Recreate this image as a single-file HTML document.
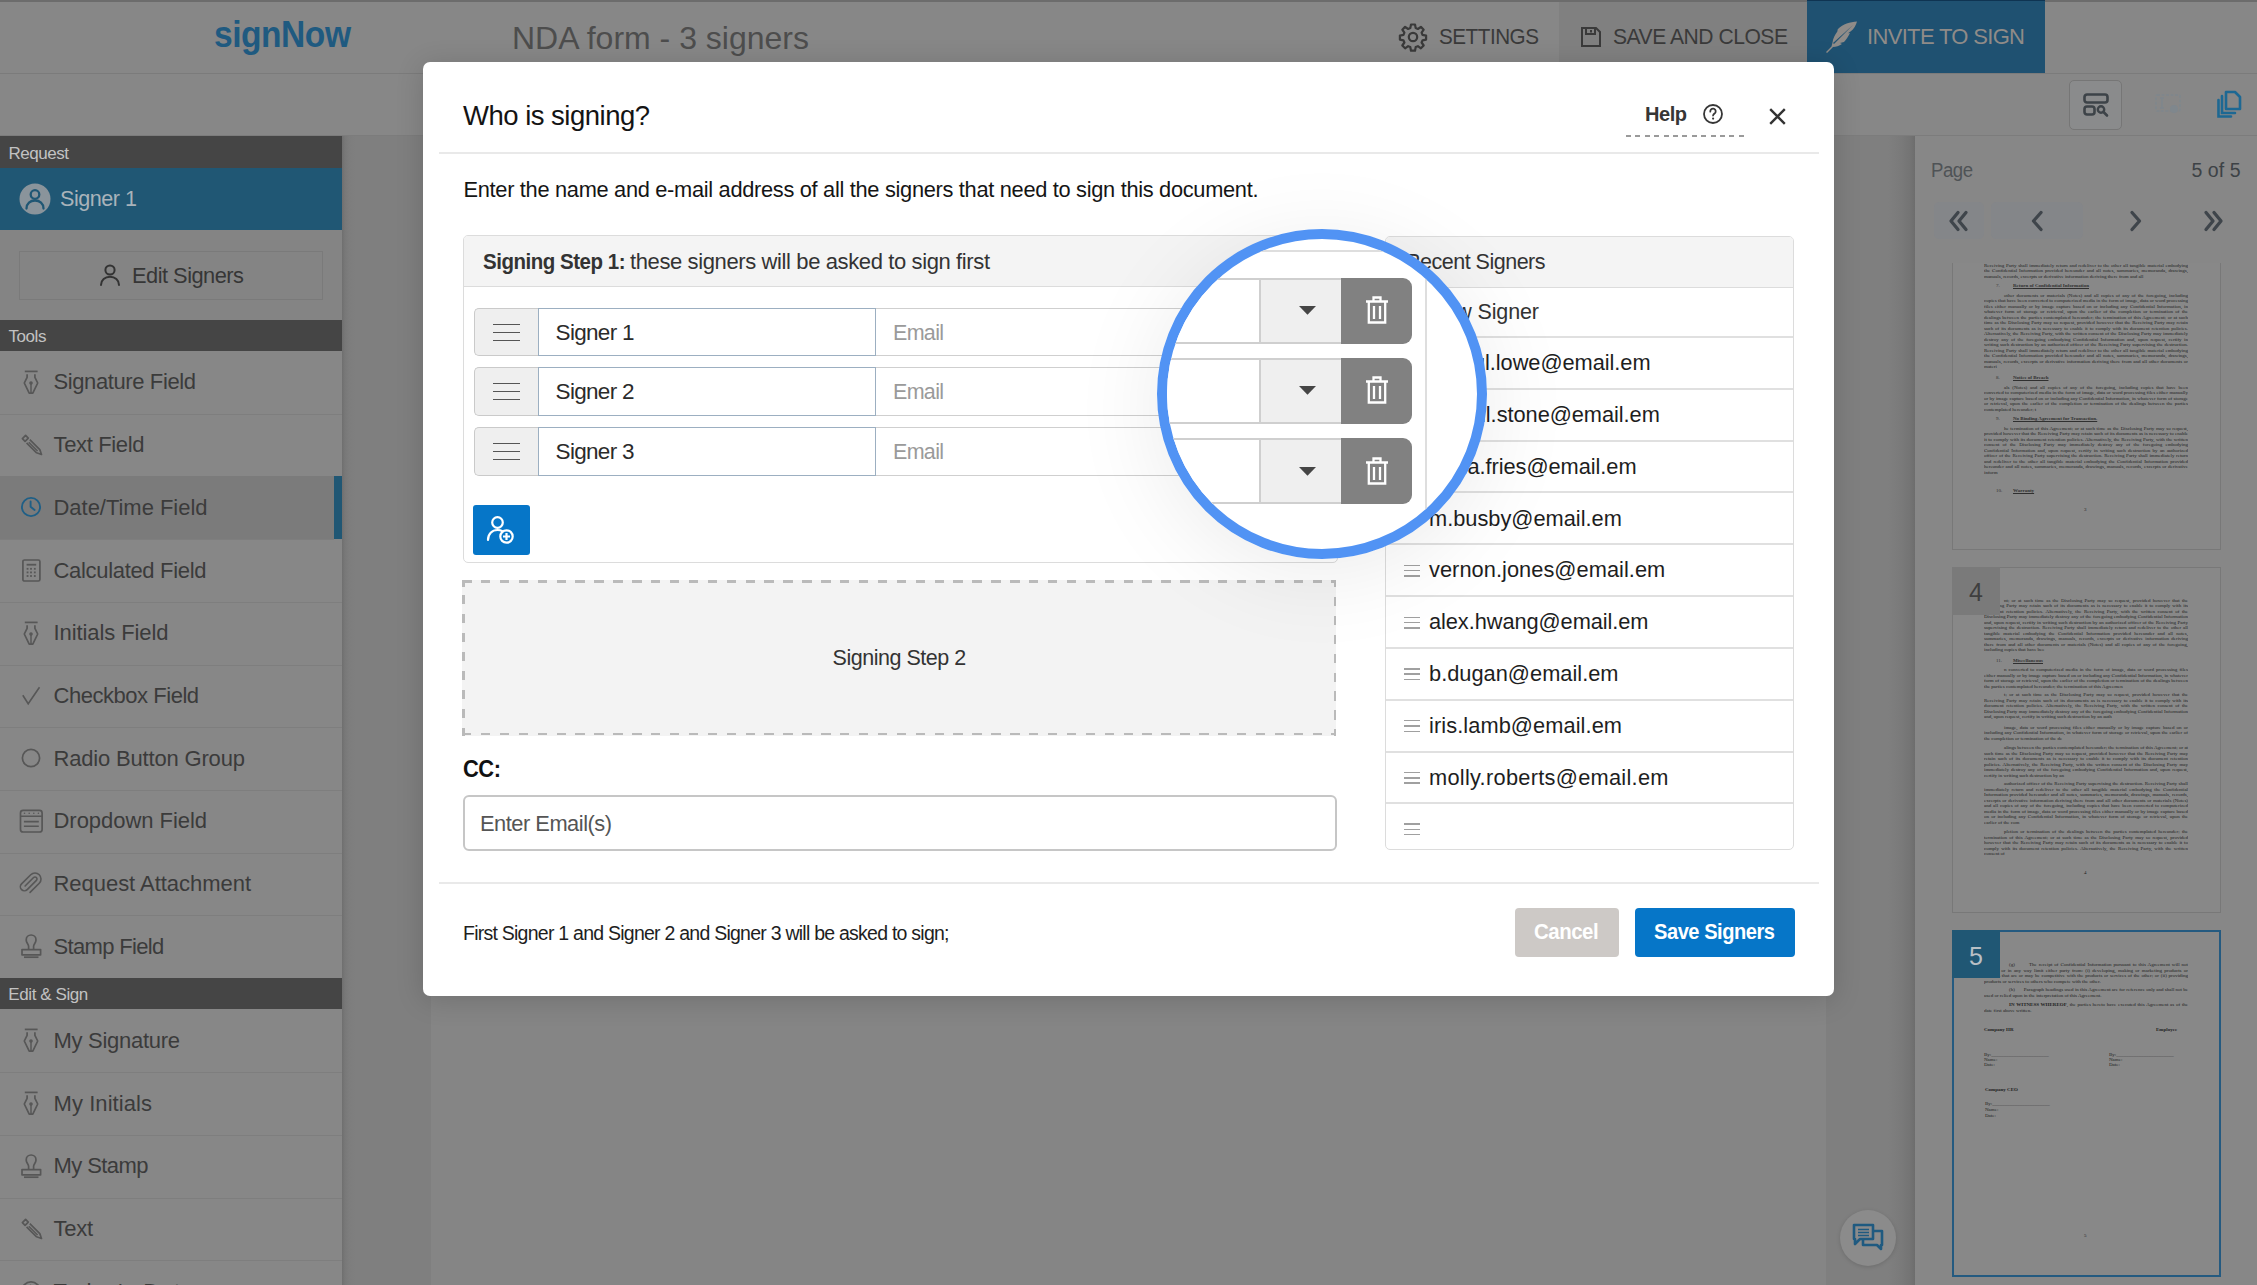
<!DOCTYPE html>
<html><head><meta charset="utf-8">
<style>
*{box-sizing:border-box}
html,body{margin:0;padding:0}
body{width:2257px;height:1285px;overflow:hidden;position:relative;background:#858585;font-family:"Liberation Sans",sans-serif}
.a{position:absolute}
.t{position:absolute;white-space:nowrap;line-height:1}
svg{position:absolute;overflow:visible}
</style></head><body>
<div class="a" style="left:0px;top:0px;width:2257px;height:74px;background:#878787;border-top:2px solid #6c6c6c;border-bottom:1px solid #7b7b7b"></div>
<div class="t" style="left: 214px; top: 16.5px; font-size: 36px; color: rgb(31, 90, 128); font-weight: bold; letter-spacing: -0.5px; transform-origin: 0px 0px; transform: scaleX(0.932);">signNow</div>
<div class="t" style="left: 512px; top: 21.7px; font-size: 32px; color: rgb(77, 77, 77); letter-spacing: 0.002px;">NDA form - 3 signers</div>
<div class="a" style="left:1559px;top:2px;width:248px;height:71px;background:#808080"></div>
<svg style="left:1399px;top:23px" width="28" height="28" viewBox="0 0 28 28">
<path d="M12 1.5h4l.7 3.6 2.2.9 3-2.1 2.8 2.8-2.1 3 .9 2.2 3.6.7v4l-3.6.7-.9 2.2 2.1 3-2.8 2.8-3-2.1-2.2.9-.7 3.6h-4l-.7-3.6-2.2-.9-3 2.1-2.8-2.8 2.1-3-.9-2.2-3.6-.7v-4l3.6-.7.9-2.2-2.1-3 2.8-2.8 3 2.1 2.2-.9z" fill="none" stroke="#3a3a3a" stroke-width="2.2" stroke-linejoin="round"></path>
<circle cx="14" cy="14" r="4.2" fill="none" stroke="#3a3a3a" stroke-width="2.2"></circle></svg>
<div class="t" style="left: 1439px; top: 25.8px; font-size: 22px; color: rgb(58, 58, 58); letter-spacing: -0.5px; transform-origin: 0px 0px; transform: scaleX(0.9388);">SETTINGS</div>
<svg style="left:1581px;top:27px" width="20" height="20" viewBox="0 0 20 20">
<path d="M1 1h14l4 4v14H1z" fill="none" stroke="#3a3a3a" stroke-width="2"></path>
<path d="M5 1v6h9V1M10 3v2.5" fill="none" stroke="#3a3a3a" stroke-width="2"></path></svg>
<div class="t" style="left: 1613px; top: 25.8px; font-size: 22px; color: rgb(58, 58, 58); letter-spacing: -0.5px; transform-origin: 0px 0px; transform: scaleX(0.9583);">SAVE AND CLOSE</div>
<div class="a" style="left:1807px;top:0px;width:238px;height:73px;background:#1f5171;border-top:1.5px solid #0f3452"></div>
<svg style="left:1826px;top:21px" width="32" height="32" viewBox="0 0 32 32">
<path d="M31 0.5C24 1 17 3 12 8c-1 1 0 2-1 3-2 3-4 6-4.5 10.5l-1 4L0 31l1 1 6-6c3 0 6-1 9-3l-2-1 4-1c2-2 4-5 6-9l-2 .3 2.5-1.7C28 8 30 4 31 .5zM27 4L8 23l-1-1z" fill="#8f8b88"></path></svg>
<div class="t" style="left: 1867px; top: 25.8px; font-size: 22px; color: rgb(143, 139, 136); letter-spacing: -0.667px;">INVITE TO SIGN</div>
<div class="a" style="left:0px;top:74px;width:2257px;height:62px;background:#878787;border-bottom:1px solid #7c7c7c"></div>
<div class="a" style="left:2069px;top:80px;width:53px;height:50px;background:#8a8b8c;border:1.5px solid #767676;border-radius:5px"></div>
<svg style="left:2083px;top:93px" width="26" height="24" viewBox="0 0 26 24">
<rect x="1.5" y="1.5" width="23" height="8" rx="2.5" fill="none" stroke="#3d4348" stroke-width="2.6"></rect>
<rect x="1.5" y="13.5" width="10" height="8" rx="2.5" fill="none" stroke="#3d4348" stroke-width="2.6"></rect>
<circle cx="18" cy="16.5" r="3.2" fill="none" stroke="#3d4348" stroke-width="2.4"></circle>
<path d="M20.5 19l3.5 3.5" stroke="#3d4348" stroke-width="2.6" stroke-linecap="round"></path></svg>
<svg style="left:2155px;top:94px" width="26" height="22" viewBox="0 0 26 22">
<rect x="1" y="1" width="24" height="16" rx="1" fill="none" stroke="#7f878d" stroke-width="1.6" stroke-dasharray="3 1.5"></rect>
<path d="M5 4h4M7 4v10M5 14h4" stroke="#7f878d" stroke-width="1.6"></path>
<circle cx="19" cy="15" r="4" fill="#7f878d"></circle></svg>
<svg style="left:2217px;top:91px" width="24" height="27" viewBox="0 0 24 27">
<path d="M9 1h9l5 5v12H9z" fill="none" stroke="#1d6893" stroke-width="2.6" stroke-linejoin="round"></path>
<path d="M5 5v17h13" fill="none" stroke="#1d6893" stroke-width="2.6" stroke-linecap="round"></path>
<path d="M1.5 9v16.5H14" fill="none" stroke="#1d6893" stroke-width="2.6" stroke-linecap="round"></path></svg>
<div class="a" style="left:0px;top:136px;width:342px;height:1149px;background:#878787"></div>
<div class="a" style="left:0px;top:136px;width:342px;height:31.6px;background:#454545"></div>
<div class="t" style="left: 8.4px; top: 144.6px; font-size: 17px; color: rgb(194, 194, 194); letter-spacing: -0.455px;">Request</div>
<div class="a" style="left:0px;top:167.6px;width:342px;height:62.1px;background:#205774"></div>
<svg style="left:18.5px;top:183px" width="32" height="32" viewBox="0 0 32 32">
<circle cx="16" cy="16" r="15.5" fill="#8a949b"></circle>
<circle cx="16" cy="11.5" r="4.3" fill="none" stroke="#205774" stroke-width="2.3"></circle>
<path d="M7.5 25.5c0-5 3.8-8 8.5-8s8.5 3 8.5 8" fill="none" stroke="#205774" stroke-width="2.3" stroke-linecap="round"></path></svg>
<div class="t" style="left: 60px; top: 188px; font-size: 22.4px; color: rgb(169, 179, 186); letter-spacing: -0.5px; transform-origin: 0px 0px; transform: scaleX(0.9636);">Signer 1</div>
<div class="a" style="left:0px;top:229.7px;width:342px;height:90.1px;background:#848484"></div>
<div class="a" style="left:19.3px;top:250.8px;width:303.5px;height:49.6px;border:1.2px solid #7a7a7a"></div>
<svg style="left:100px;top:264px" width="20" height="22" viewBox="0 0 20 22">
<circle cx="10" cy="6" r="4.6" fill="none" stroke="#333" stroke-width="2"></circle>
<path d="M1 21c0-5 4-8.3 9-8.3s9 3.3 9 8.3" fill="none" stroke="#333" stroke-width="2" stroke-linecap="round"></path></svg>
<div class="t" style="left: 132px; top: 265.1px; font-size: 21.8px; color: rgb(54, 54, 54); letter-spacing: -0.503px;">Edit Signers</div>
<div class="a" style="left:0px;top:319.8px;width:342px;height:31px;background:#454545"></div>
<div class="t" style="left: 8.4px; top: 327.6px; font-size: 17px; color: rgb(194, 194, 194); letter-spacing: -0.422px;">Tools</div>
<svg style="left:19.0px;top:369.7px" width="24" height="24" viewBox="0 0 24 24"><path d="M5.8 1.4h12.8" stroke="#575757" stroke-width="1.7"></path><path d="M8.1 4.3V7.3L5.3 13 10.2 23.2H13.8L18.7 13 15.9 7.3V4.3" fill="none" stroke="#575757" stroke-width="1.7" stroke-linejoin="round"></path><path d="M12 13v10" stroke="#575757" stroke-width="1.5"></path><circle cx="12" cy="13" r="1.8" fill="#575757"></circle></svg>
<div class="a" style="left:0px;top:413.7px;width:342px;height:1.2px;background:#7e7e7e"></div>
<div class="t" style="left: 53.5px; top: 371.4px; font-size: 22px; color: rgb(59, 59, 59); letter-spacing: -0.392px;">Signature Field</div>
<svg style="left:19.0px;top:432.4px" width="24" height="24" viewBox="0 0 24 24"><path d="M3.4 6.6L6.6 3.4 9.3 6.1 6.1 9.3z" fill="none" stroke="#575757" stroke-width="1.7" stroke-linejoin="round"></path><path d="M7.6 10.8L17.6 20.8 22.5 22.5 20.8 17.6 10.8 7.6" fill="none" stroke="#575757" stroke-width="1.7" stroke-linejoin="round"></path><path d="M9.8 10.2L18.6 19" stroke="#575757" stroke-width="1.4"></path></svg>
<div class="a" style="left:0px;top:476.4px;width:342px;height:1.2px;background:#7e7e7e"></div>
<div class="t" style="left: 53.5px; top: 434.1px; font-size: 22px; color: rgb(59, 59, 59); letter-spacing: -0.351px;">Text Field</div>
<div class="a" style="left:0px;top:476.1px;width:342px;height:62.7px;background:#7b7b7b"></div>
<div class="a" style="left:334px;top:476.1px;width:8px;height:62.7px;background:#205774"></div>
<svg style="left:19.0px;top:495.1px" width="24" height="24" viewBox="0 0 24 24"><circle cx="12" cy="12" r="9.1" fill="none" stroke="#1f5f86" stroke-width="1.9"></circle><path d="M11.6 6.5V11.8L15.6 15" fill="none" stroke="#1f5f86" stroke-width="1.9" stroke-linecap="round" stroke-linejoin="round"></path></svg>
<div class="a" style="left:0px;top:539.1px;width:334px;height:1.2px;background:#7e7e7e"></div>
<div class="t" style="left: 53.5px; top: 496.8px; font-size: 22px; color: rgb(59, 59, 59); letter-spacing: -0.032px;">Date/Time Field</div>
<svg style="left:19.0px;top:557.8px" width="24" height="24" viewBox="0 0 24 24"><rect x="3.9" y="2" width="17" height="21" rx="1.6" fill="none" stroke="#575757" stroke-width="1.7"></rect><path d="M7.6 6.7h9.6" stroke="#575757" stroke-width="1.8"></path><rect x="7.65" y="9.90" width="1.8" height="1.8" fill="#575757"></rect><rect x="11.10" y="9.90" width="1.8" height="1.8" fill="#575757"></rect><rect x="14.90" y="9.90" width="1.8" height="1.8" fill="#575757"></rect><rect x="7.65" y="13.50" width="1.8" height="1.8" fill="#575757"></rect><rect x="11.10" y="13.50" width="1.8" height="1.8" fill="#575757"></rect><rect x="14.90" y="13.50" width="1.8" height="1.8" fill="#575757"></rect><rect x="7.65" y="17.10" width="1.8" height="1.8" fill="#575757"></rect><rect x="11.10" y="17.10" width="1.8" height="1.8" fill="#575757"></rect><rect x="14.90" y="17.10" width="1.8" height="1.8" fill="#575757"></rect></svg>
<div class="a" style="left:0px;top:601.8px;width:342px;height:1.2px;background:#7e7e7e"></div>
<div class="t" style="left: 53.5px; top: 559.5px; font-size: 22px; color: rgb(59, 59, 59); letter-spacing: -0.317px;">Calculated Field</div>
<svg style="left:19.0px;top:620.5px" width="24" height="24" viewBox="0 0 24 24"><path d="M5.8 1.4h12.8" stroke="#575757" stroke-width="1.7"></path><path d="M8.1 4.3V7.3L5.3 13 10.2 23.2H13.8L18.7 13 15.9 7.3V4.3" fill="none" stroke="#575757" stroke-width="1.7" stroke-linejoin="round"></path><path d="M12 13v10" stroke="#575757" stroke-width="1.5"></path><circle cx="12" cy="13" r="1.8" fill="#575757"></circle></svg>
<div class="a" style="left:0px;top:664.5px;width:342px;height:1.2px;background:#7e7e7e"></div>
<div class="t" style="left: 53.5px; top: 622.2px; font-size: 22px; color: rgb(59, 59, 59); letter-spacing: -0.089px;">Initials Field</div>
<svg style="left:19.0px;top:683.2px" width="24" height="24" viewBox="0 0 24 24"><path d="M3.8 12.3L9.2 20.8 20.5 4.2" fill="none" stroke="#575757" stroke-width="1.6"></path></svg>
<div class="a" style="left:0px;top:727.2px;width:342px;height:1.2px;background:#7e7e7e"></div>
<div class="t" style="left: 53.5px; top: 684.9px; font-size: 22px; color: rgb(59, 59, 59); letter-spacing: -0.465px;">Checkbox Field</div>
<svg style="left:19.0px;top:745.9px" width="24" height="24" viewBox="0 0 24 24"><circle cx="12" cy="12" r="8.6" fill="none" stroke="#575757" stroke-width="1.7"></circle></svg>
<div class="a" style="left:0px;top:789.9000000000001px;width:342px;height:1.2px;background:#7e7e7e"></div>
<div class="t" style="left: 53.5px; top: 747.6px; font-size: 22px; color: rgb(59, 59, 59); letter-spacing: -0.175px;">Radio Button Group</div>
<svg style="left:19.0px;top:808.6px" width="24" height="24" viewBox="0 0 24 24"><rect x="1.5" y="1.4" width="21.6" height="21.6" rx="2.6" fill="none" stroke="#575757" stroke-width="1.7"></rect><path d="M1.5 7.3h21.6M4.9 12.6h14.9M4.9 17.2h14.9" stroke="#575757" stroke-width="1.6"></path><circle cx="5.5" cy="4.3" r="0.8" fill="#575757"></circle><circle cx="10.2" cy="4.3" r="0.8" fill="#575757"></circle><circle cx="14.8" cy="4.3" r="0.8" fill="#575757"></circle><circle cx="19.4" cy="4.3" r="0.8" fill="#575757"></circle></svg>
<div class="a" style="left:0px;top:852.6px;width:342px;height:1.2px;background:#7e7e7e"></div>
<div class="t" style="left: 53.5px; top: 810.3px; font-size: 22px; color: rgb(59, 59, 59); letter-spacing: -0.044px;">Dropdown Field</div>
<svg style="left:19.0px;top:871.3px" width="24" height="24" viewBox="0 0 24 24"><path d="M21.4 11.05l-9.2 9.2a6 6 0 01-8.5-8.5l9.2-9.2a4 4 0 015.66 5.66l-9.2 9.2a2 2 0 01-2.83-2.83l8.5-8.5" fill="none" stroke="#575757" stroke-width="1.6" stroke-linecap="round" transform="translate(24 0) scale(-1 1) rotate(90 12 12)"></path></svg>
<div class="a" style="left:0px;top:915.3px;width:342px;height:1.2px;background:#7e7e7e"></div>
<div class="t" style="left: 53.5px; top: 873px; font-size: 22px; color: rgb(59, 59, 59); letter-spacing: -0.037px;">Request Attachment</div>
<svg style="left:19.0px;top:934.0px" width="24" height="24" viewBox="0 0 24 24"><path d="M9.6 15.5V12.3C9.6 10.3 7.2 9 7.2 5.9A4.8 4.8 0 0117 5.9C17 9 14.6 10.3 14.6 12.3V15.5" fill="none" stroke="#575757" stroke-width="1.7"></path><path d="M3 15.6H21.6V20.8H3z" fill="none" stroke="#575757" stroke-width="1.7" stroke-linejoin="round"></path><path d="M5 23.2H19.5" stroke="#575757" stroke-width="1.7"></path></svg>
<div class="t" style="left: 53.5px; top: 935.7px; font-size: 22px; color: rgb(59, 59, 59); letter-spacing: -0.659px;">Stamp Field</div>
<div class="a" style="left:0px;top:978.2px;width:342px;height:31px;background:#454545"></div>
<div class="t" style="left: 8.3px; top: 986.4px; font-size: 17px; color: rgb(194, 194, 194); letter-spacing: -0.411px;">Edit &amp; Sign</div>
<svg style="left:19.0px;top:1028.2px" width="24" height="24" viewBox="0 0 24 24"><path d="M5.8 1.4h12.8" stroke="#575757" stroke-width="1.7"></path><path d="M8.1 4.3V7.3L5.3 13 10.2 23.2H13.8L18.7 13 15.9 7.3V4.3" fill="none" stroke="#575757" stroke-width="1.7" stroke-linejoin="round"></path><path d="M12 13v10" stroke="#575757" stroke-width="1.5"></path><circle cx="12" cy="13" r="1.8" fill="#575757"></circle></svg>
<div class="a" style="left:0px;top:1072.2px;width:342px;height:1.2px;background:#7e7e7e"></div>
<div class="t" style="left: 53.5px; top: 1029.9px; font-size: 22px; color: rgb(59, 59, 59); letter-spacing: -0.284px;">My Signature</div>
<svg style="left:19.0px;top:1090.9px" width="24" height="24" viewBox="0 0 24 24"><path d="M5.8 1.4h12.8" stroke="#575757" stroke-width="1.7"></path><path d="M8.1 4.3V7.3L5.3 13 10.2 23.2H13.8L18.7 13 15.9 7.3V4.3" fill="none" stroke="#575757" stroke-width="1.7" stroke-linejoin="round"></path><path d="M12 13v10" stroke="#575757" stroke-width="1.5"></path><circle cx="12" cy="13" r="1.8" fill="#575757"></circle></svg>
<div class="a" style="left:0px;top:1134.9px;width:342px;height:1.2px;background:#7e7e7e"></div>
<div class="t" style="left: 53.5px; top: 1092.6px; font-size: 22px; color: rgb(59, 59, 59); letter-spacing: 0.07px;">My Initials</div>
<svg style="left:19.0px;top:1153.6px" width="24" height="24" viewBox="0 0 24 24"><path d="M9.6 15.5V12.3C9.6 10.3 7.2 9 7.2 5.9A4.8 4.8 0 0117 5.9C17 9 14.6 10.3 14.6 12.3V15.5" fill="none" stroke="#575757" stroke-width="1.7"></path><path d="M3 15.6H21.6V20.8H3z" fill="none" stroke="#575757" stroke-width="1.7" stroke-linejoin="round"></path><path d="M5 23.2H19.5" stroke="#575757" stroke-width="1.7"></path></svg>
<div class="a" style="left:0px;top:1197.6000000000001px;width:342px;height:1.2px;background:#7e7e7e"></div>
<div class="t" style="left: 53.5px; top: 1155.3px; font-size: 22px; color: rgb(59, 59, 59); letter-spacing: -0.576px;">My Stamp</div>
<svg style="left:19.0px;top:1216.3px" width="24" height="24" viewBox="0 0 24 24"><path d="M3.4 6.6L6.6 3.4 9.3 6.1 6.1 9.3z" fill="none" stroke="#575757" stroke-width="1.7" stroke-linejoin="round"></path><path d="M7.6 10.8L17.6 20.8 22.5 22.5 20.8 17.6 10.8 7.6" fill="none" stroke="#575757" stroke-width="1.7" stroke-linejoin="round"></path><path d="M9.8 10.2L18.6 19" stroke="#575757" stroke-width="1.4"></path></svg>
<div class="a" style="left:0px;top:1260.3000000000002px;width:342px;height:1.2px;background:#7e7e7e"></div>
<div class="t" style="left: 53.5px; top: 1218px; font-size: 22px; color: rgb(59, 59, 59); letter-spacing: -0.286px;">Text</div>
<svg style="left:19.0px;top:1279.0px" width="24" height="24" viewBox="0 0 24 24"><circle cx="12" cy="12" r="9.1" fill="none" stroke="#575757" stroke-width="1.9"></circle><path d="M11.6 6.5V11.8L15.6 15" fill="none" stroke="#575757" stroke-width="1.9" stroke-linecap="round" stroke-linejoin="round"></path></svg>
<div class="a" style="left:0px;top:1323.0px;width:342px;height:1.2px;background:#7e7e7e"></div>
<div class="t" style="left: 53.5px; top: 1280.7px; font-size: 22px; color: rgb(59, 59, 59); letter-spacing: 1.227px;">Today's Date</div>
<div class="a" style="left:342px;top:136px;width:88.5px;height:1149px;background:linear-gradient(to right,#6f6f6f 0px,#787878 3px,#7d7d7d 7px,#7f7f7f 14px,#7f7f7f 100%)"></div>
<div class="a" style="left:1826px;top:136px;width:89px;height:1149px;background:linear-gradient(to right,#7f7f7f 0,#7f7f7f 62px,#7a7a7a 75px,#747474 84px,#6d6d6d 89px)"></div>
<div class="a" style="left:1915px;top:136px;width:342px;height:1149px;background:#878787"></div>
<div class="t" style="left: 1931px; top: 160.5px; font-size: 19.5px; color: rgb(79, 83, 86); letter-spacing: -0.5px; transform-origin: 0px 0px; transform: scaleX(0.9535);">Page</div>
<div class="t" style="left: 2191.5px; top: 160.5px; font-size: 19.5px; color: rgb(61, 66, 70); letter-spacing: 0.041px;">5 of 5</div>
<div class="a" style="left:1933.8px;top:202.4px;width:50.5px;height:36.6px;background:#848689;border-radius:5px"></div>
<div class="a" style="left:1990.7px;top:202.4px;width:92.5px;height:36.6px;background:#848689;border-radius:5px"></div>
<svg style="left:1949px;top:211px" width="20" height="20" viewBox="0 0 20 20">
<path d="M9 1.5L2 10l7 8.5M17 1.5L10 10l7 8.5" fill="none" stroke="#3f454b" stroke-width="3.3" stroke-linejoin="round" stroke-linecap="round"></path></svg>
<svg style="left:2031px;top:211px" width="12" height="20" viewBox="0 0 12 20">
<path d="M10 1.5L2.5 10l7.5 8.5" fill="none" stroke="#3f454b" stroke-width="3.3" stroke-linecap="round" stroke-linejoin="round"></path></svg>
<svg style="left:2130px;top:211px" width="12" height="20" viewBox="0 0 12 20">
<path d="M2 1.5L9.5 10 2 18.5" fill="none" stroke="#3f454b" stroke-width="3.3" stroke-linecap="round" stroke-linejoin="round"></path></svg>
<svg style="left:2203px;top:211px" width="20" height="20" viewBox="0 0 20 20">
<path d="M3 1.5L10 10l-7 8.5M11 1.5L18 10l-7 8.5" fill="none" stroke="#3f454b" stroke-width="3.3" stroke-linejoin="round" stroke-linecap="round"></path></svg>
<div class="a" style="left:1915px;top:263px;width:342px;height:1022px;overflow:hidden">
<div class="a" style="left:37.0px;top:-13.0px;width:268.5px;height:299.5px;border:1.2px solid #787878;background:#888"></div>
<div class="a" style="left:69px;top:-0.4px;width:204px;font-family:'Liberation Serif',serif;font-size:5px;line-height:5.5px;text-align:justify;text-align-last:left;color:#1f1f1f;overflow:hidden;height:17.0px">Receiving Party shall immediately return and redeliver to the other all tangible material embodying the Confidential Information provided hereunder and all notes, summaries, memoranda, drawings, manuals, records, excerpts or derivative information deriving there from and all </div>
<div class="a" style="left:81px;top:20.1px;font-family:'Liberation Serif',serif;font-size:5px;line-height:5.3px;color:#303030;white-space:nowrap">7.<span style="position:absolute;left:17px;font-weight:bold;text-decoration:underline">Return of Confidential Information</span></div>
<div class="a" style="left:69px;top:29.6px;width:204px;font-family:'Liberation Serif',serif;font-size:5px;line-height:5.5px;text-align:justify;text-align-last:left;color:#1f1f1f;text-indent:20px;overflow:hidden;height:77.5px">other documents or materials (Notes) and all copies of any of the foregoing, including copies that have been converted to computerized media in the form of image, data or word processing files either manually or by image capture based on or including any Confidential Information, in whatever form of storage or retrieval, upon the earlier of the completion or termination of the dealings between the parties contemplated hereunder; the termination of this Agreement; or at such time as the Disclosing Party may so request, provided however that the Receiving Party may retain such of its documents as is necessary to enable it to comply with its document retention policies. Alternatively, the Receiving Party, with the written consent of the Disclosing Party may immediately destroy any of the foregoing embodying Confidential Information and, upon request, certify in writing such destruction by an authorized officer of the Receiving Party supervising the destruction. Receiving Party shall immediately return and redeliver to the other all tangible material embodying the Confidential Information provided hereunder and all notes, summaries, memoranda, drawings, manuals, records, excerpts or derivative information deriving there from and all other documents or materi</div>
<div class="a" style="left:81px;top:112.1px;font-family:'Liberation Serif',serif;font-size:5px;line-height:5.3px;color:#303030;white-space:nowrap">8.<span style="position:absolute;left:17px;font-weight:bold;text-decoration:underline">Notice of Breach</span></div>
<div class="a" style="left:69px;top:121.6px;width:204px;font-family:'Liberation Serif',serif;font-size:5px;line-height:5.5px;text-align:justify;text-align-last:left;color:#1f1f1f;text-indent:20px;overflow:hidden;height:28.0px">als (Notes) and all copies of any of the foregoing, including copies that have been converted to computerized media in the form of image, data or word processing files either manually or by image capture based on or including any Confidential Information, in whatever form of storage or retrieval, upon the earlier of the completion or termination of the dealings between the parties contemplated hereunder; t</div>
<div class="a" style="left:81px;top:153.1px;font-family:'Liberation Serif',serif;font-size:5px;line-height:5.3px;color:#303030;white-space:nowrap">9.<span style="position:absolute;left:17px;font-weight:bold;text-decoration:underline">No Binding Agreement for Transaction.</span></div>
<div class="a" style="left:69px;top:162.6px;width:204px;font-family:'Liberation Serif',serif;font-size:5px;line-height:5.5px;text-align:justify;text-align-last:left;color:#1f1f1f;text-indent:20px;overflow:hidden;height:50.0px">he termination of this Agreement; or at such time as the Disclosing Party may so request, provided however that the Receiving Party may retain such of its documents as is necessary to enable it to comply with its document retention policies. Alternatively, the Receiving Party, with the written consent of the Disclosing Party may immediately destroy any of the foregoing embodying Confidential Information and, upon request, certify in writing such destruction by an authorized officer of the Receiving Party supervising the destruction. Receiving Party shall immediately return and redeliver to the other all tangible material embodying the Confidential Information provided hereunder and all notes, summaries, memoranda, drawings, manuals, records, excerpts or derivative inform</div>
<div class="a" style="left:81px;top:225.1px;font-family:'Liberation Serif',serif;font-size:5px;line-height:5.3px;color:#303030;white-space:nowrap">10.<span style="position:absolute;left:17px;font-weight:bold;text-decoration:underline">Warranty</span></div>
<div class="a" style="left:169px;top:243.7px;font-family:'Liberation Serif',serif;font-size:5px;line-height:5.3px;color:#1f1f1f;white-space:nowrap;">3</div>
<div class="a" style="left:37.0px;top:303.5px;width:268.5px;height:346.0px;border:1.2px solid #787878;background:#888"></div>
<div class="a" style="left:69px;top:334.7px;width:204px;font-family:'Liberation Serif',serif;font-size:5px;line-height:5.5px;text-align:justify;text-align-last:left;color:#1f1f1f;text-indent:20px;overflow:hidden;height:55.5px">nt; or at such time as the Disclosing Party may so request, provided however that the Receiving Party may retain such of its documents as is necessary to enable it to comply with its document retention policies. Alternatively, the Receiving Party, with the written consent of the Disclosing Party may immediately destroy any of the foregoing embodying Confidential Information and, upon request, certify in writing such destruction by an authorized officer of the Receiving Party supervising the destruction. Receiving Party shall immediately return and redeliver to the other all tangible material embodying the Confidential Information provided hereunder and all notes, summaries, memoranda, drawings, manuals, records, excerpts or derivative information deriving there from and all other documents or materials (Notes) and all copies of any of the foregoing, including copies that have bee</div>
<div class="a" style="left:81px;top:394.5px;font-family:'Liberation Serif',serif;font-size:5px;line-height:5.3px;color:#303030;white-space:nowrap">11.<span style="position:absolute;left:17px;font-weight:bold;text-decoration:underline">Miscellaneous</span></div>
<div class="a" style="left:69px;top:404.1px;width:204px;font-family:'Liberation Serif',serif;font-size:5px;line-height:5.5px;text-align:justify;text-align-last:left;color:#1f1f1f;text-indent:20px;overflow:hidden;height:22.5px">n converted to computerized media in the form of image, data or word processing files either manually or by image capture based on or including any Confidential Information, in whatever form of storage or retrieval, upon the earlier of the completion or termination of the dealings between the parties contemplated hereunder; the termination of this Agreemen</div>
<div class="a" style="left:69px;top:429.1px;width:204px;font-family:'Liberation Serif',serif;font-size:5px;line-height:5.5px;text-align:justify;text-align-last:left;color:#1f1f1f;text-indent:20px;overflow:hidden;height:28.0px">t; or at such time as the Disclosing Party may so request, provided however that the Receiving Party may retain such of its documents as is necessary to enable it to comply with its document retention policies. Alternatively, the Receiving Party, with the written consent of the Disclosing Party may immediately destroy any of the foregoing embodying Confidential Information and, upon request, certify in writing such destruction by an auth</div>
<div class="a" style="left:69px;top:461.6px;width:204px;font-family:'Liberation Serif',serif;font-size:5px;line-height:5.5px;text-align:justify;text-align-last:left;color:#1f1f1f;text-indent:20px;overflow:hidden;height:17.0px"> image, data or word processing files either manually or by image capture based on or including any Confidential Information, in whatever form of storage or retrieval, upon the earlier of the completion or termination of the de</div>
<div class="a" style="left:69px;top:482.1px;width:204px;font-family:'Liberation Serif',serif;font-size:5px;line-height:5.5px;text-align:justify;text-align-last:left;color:#1f1f1f;text-indent:20px;overflow:hidden;height:33.5px">alings between the parties contemplated hereunder; the termination of this Agreement; or at such time as the Disclosing Party may so request, provided however that the Receiving Party may retain such of its documents as is necessary to enable it to comply with its document retention policies. Alternatively, the Receiving Party, with the written consent of the Disclosing Party may immediately destroy any of the foregoing embodying Confidential Information and, upon request, certify in writing such destruction by an </div>
<div class="a" style="left:69px;top:518.1px;width:204px;font-family:'Liberation Serif',serif;font-size:5px;line-height:5.5px;text-align:justify;text-align-last:left;color:#1f1f1f;text-indent:20px;overflow:hidden;height:44.5px">authorized officer of the Receiving Party supervising the destruction. Receiving Party shall immediately return and redeliver to the other all tangible material embodying the Confidential Information provided hereunder and all notes, summaries, memoranda, drawings, manuals, records, excerpts or derivative information deriving there from and all other documents or materials (Notes) and all copies of any of the foregoing, including copies that have been converted to computerized media in the form of image, data or word processing files either manually or by image capture based on or including any Confidential Information, in whatever form of storage or retrieval, upon the earlier of the com</div>
<div class="a" style="left:69px;top:566.1px;width:204px;font-family:'Liberation Serif',serif;font-size:5px;line-height:5.5px;text-align:justify;text-align-last:left;color:#1f1f1f;text-indent:20px;overflow:hidden;height:28.0px">pletion or termination of the dealings between the parties contemplated hereunder; the termination of this Agreement; or at such time as the Disclosing Party may so request, provided however that the Receiving Party may retain such of its documents as is necessary to enable it to comply with its document retention policies. Alternatively, the Receiving Party, with the written consent of </div>
<div class="a" style="left:169px;top:607.1px;font-family:'Liberation Serif',serif;font-size:5px;line-height:5.3px;color:#1f1f1f;white-space:nowrap;">4</div>
<div class="a" style="left:37.0px;top:303.5px;width:48.0px;height:48.0px;background:#7a7a7a"></div>
<div class="t" style="left:54px;top:316.6px;font-size:25px;color:#3f3f3f;">4</div>
<div class="a" style="left:37.0px;top:667.0px;width:268.5px;height:346.5px;border:2px solid #245a80;background:#888"></div>
<div class="a" style="left:69px;top:699.1px;width:204px;font-family:'Liberation Serif',serif;font-size:5px;line-height:5.5px;text-align:justify;text-align-last:left;color:#1f1f1f;text-indent:25px;overflow:hidden;height:22.5px">(g) &nbsp; &nbsp; &nbsp; The receipt of Confidential Information pursuant to this Agreement will not prevent or in any way limit either party from: (i) developing, making or marketing products or services that are or may be competitive with the products or services of the other; or (ii) providing products or services to others who compete with the other.</div>
<div class="a" style="left:69px;top:724.1px;width:204px;font-family:'Liberation Serif',serif;font-size:5px;line-height:5.5px;text-align:justify;text-align-last:left;color:#1f1f1f;text-indent:25px;overflow:hidden;height:11.5px">(h) &nbsp; &nbsp; &nbsp; Paragraph headings used in this Agreement are for reference only and shall not be used or relied upon in the interpretation of this Agreement.</div>
<div class="a" style="left:69px;top:739.1px;width:204px;font-family:'Liberation Serif',serif;font-size:5px;line-height:5.5px;text-align:justify;text-align-last:left;color:#1f1f1f;text-indent:25px;overflow:hidden;height:11.5px"><b>IN WITNESS WHEREOF</b>, the parties hereto have executed this Agreement as of the date first above written.</div>
<div class="a" style="left:69px;top:763.8px;font-family:'Liberation Serif',serif;font-size:5px;line-height:5.3px;color:#1f1f1f;white-space:nowrap;font-weight:bold;">Company HR</div>
<div class="a" style="left:241px;top:763.8px;font-family:'Liberation Serif',serif;font-size:5px;line-height:5.3px;color:#1f1f1f;white-space:nowrap;font-weight:bold;">Employee</div>
<div class="a" style="left:69px;top:788.6px;font-family:'Liberation Serif',serif;font-size:5px;line-height:5.3px;color:#1f1f1f;white-space:nowrap;">By:_______________________</div>
<div class="a" style="left:69px;top:793.7px;font-family:'Liberation Serif',serif;font-size:5px;line-height:5.3px;color:#1f1f1f;white-space:nowrap;">Name:</div>
<div class="a" style="left:69px;top:798.7px;font-family:'Liberation Serif',serif;font-size:5px;line-height:5.3px;color:#1f1f1f;white-space:nowrap;">Date:</div>
<div class="a" style="left:194px;top:788.6px;font-family:'Liberation Serif',serif;font-size:5px;line-height:5.3px;color:#1f1f1f;white-space:nowrap;">By:_______________________</div>
<div class="a" style="left:194px;top:793.7px;font-family:'Liberation Serif',serif;font-size:5px;line-height:5.3px;color:#1f1f1f;white-space:nowrap;">Name:</div>
<div class="a" style="left:194px;top:798.7px;font-family:'Liberation Serif',serif;font-size:5px;line-height:5.3px;color:#1f1f1f;white-space:nowrap;">Date:</div>
<div class="a" style="left:70px;top:824.1px;font-family:'Liberation Serif',serif;font-size:5px;line-height:5.3px;color:#1f1f1f;white-space:nowrap;font-weight:bold;">Company CEO</div>
<div class="a" style="left:70px;top:838.1px;font-family:'Liberation Serif',serif;font-size:5px;line-height:5.3px;color:#1f1f1f;white-space:nowrap;">By:_______________________</div>
<div class="a" style="left:70px;top:844.1px;font-family:'Liberation Serif',serif;font-size:5px;line-height:5.3px;color:#1f1f1f;white-space:nowrap;">Name:</div>
<div class="a" style="left:70px;top:850.1px;font-family:'Liberation Serif',serif;font-size:5px;line-height:5.3px;color:#1f1f1f;white-space:nowrap;">Date:</div>
<div class="a" style="left:169px;top:969.6px;font-family:'Liberation Serif',serif;font-size:5px;line-height:5.3px;color:#1f1f1f;white-space:nowrap;">5</div>
<div class="a" style="left:37.0px;top:667.0px;width:48.0px;height:48.0px;background:#205774"></div>
<div class="t" style="left:54px;top:680.6px;font-size:25px;color:#b9c0c5;">5</div>
</div>
<div class="a" style="left:1840px;top:1210px;width:56px;height:56px;border-radius:50%;background:#8b8b8b;box-shadow:0 1px 4px rgba(0,0,0,.15)"></div>
<svg style="left:1852px;top:1223px" width="32" height="30" viewBox="0 0 32 30">
<path d="M2 2h19v14H8l-5 5v-5H2z" fill="none" stroke="#1f5a80" stroke-width="2.6" stroke-linejoin="round"></path>
<path d="M21 8h9v14h-1v4l-4-4H11v-6" fill="none" stroke="#1f5a80" stroke-width="2.6" stroke-linejoin="round"></path>
<path d="M6 6.5h11M6 9.5h11M6 12.5h11" stroke="#1f5a80" stroke-width="1.6"></path></svg>
<div class="a" style="left:423px;top:62px;width:1411px;height:934.3px;background:#fff;border-radius:7px;box-shadow:0 4px 28px rgba(0,0,0,.16)"></div>
<div class="t" style="left: 463px; top: 101.9px; font-size: 27.5px; color: rgb(20, 20, 20); letter-spacing: -0.509px;">Who is signing?</div>
<div class="t" style="left: 1645.4px; top: 104.1px; font-size: 20.5px; color: rgb(54, 54, 54); font-weight: bold; letter-spacing: -0.5px; transform-origin: 0px 0px; transform: scaleX(0.9782);">Help</div>
<svg style="left:1703px;top:104px" width="20" height="20" viewBox="0 0 20 20">
<circle cx="10" cy="10" r="9" fill="none" stroke="#363636" stroke-width="1.8"></circle>
<path d="M7.3 7.6a2.7 2.7 0 115.3.5c-.3 1.3-2.3 1.7-2.5 3.4" fill="none" stroke="#363636" stroke-width="1.8" stroke-linecap="round"></path>
<circle cx="10.1" cy="14.6" r="1.1" fill="#363636"></circle></svg>
<div class="a" style="left:1626px;top:134.5px;width:119px;height:2px;background:repeating-linear-gradient(to right,#9a9a9a 0 5px,transparent 5px 9.4px)"></div>
<svg style="left:1769px;top:107.5px" width="17" height="17" viewBox="0 0 17 17">
<path d="M1.2 1.2l14.6 14.6M15.8 1.2L1.2 15.8" stroke="#333" stroke-width="2.4"></path></svg>
<div class="a" style="left:438.5px;top:151.5px;width:1380px;height:2px;background:#e9e9e9"></div>
<div class="t" style="left: 463.5px; top: 178.7px; font-size: 21.8px; color: rgb(21, 21, 21); letter-spacing: -0.301px;">Enter the name and e-mail address of all the signers that need to sign this document.</div>
<div class="a" style="left:462.5px;top:235.4px;width:875px;height:327.5px;border:1.5px solid #dcdcdc;border-radius:5px;background:#fff"></div>
<div class="a" style="left:463.5px;top:236.4px;width:873px;height:51px;background:#f4f4f4;border-radius:4px 4px 0 0;border-bottom:1.5px solid #dcdcdc"></div>
<div class="t" style="left: 482.7px; top: 250.8px; font-size: 22px; color: rgb(51, 51, 51); font-weight: bold; letter-spacing: -0.5px; transform-origin: 0px 0px; transform: scaleX(0.9306);">Signing Step 1:</div>
<div class="t" style="left: 630px; top: 250.8px; font-size: 22px; color: rgb(51, 51, 51); letter-spacing: -0.385px;">these signers will be asked to sign first</div>
<div class="a" style="left:474.2px;top:307.7px;width:64.5px;height:48.8px;background:#efefef;border:1.5px solid #cacaca;border-right:none;border-radius:5px 0 0 5px"></div>
<div class="a" style="left:493px;top:324px;width:26.5px;height:1.4px;background:#555"></div>
<div class="a" style="left:493px;top:332px;width:26.5px;height:1.4px;background:#555"></div>
<div class="a" style="left:493px;top:340px;width:26.5px;height:1.4px;background:#555"></div>
<div class="a" style="left:875px;top:307.7px;width:451px;height:48.8px;background:#fff;border-top:1.5px solid #cfcfcf;border-bottom:1.5px solid #cfcfcf"></div>
<div class="a" style="left:538.4px;top:307.7px;width:337.5px;height:48.8px;background:#fff;border:1.5px solid #9cafc1"></div>
<div class="t" style="left: 555.6px; top: 321.8px; font-size: 22.5px; color: rgb(43, 43, 43); letter-spacing: -0.688px;">Signer 1</div>
<div class="t" style="left: 893px; top: 322.6px; font-size: 21.5px; color: rgb(154, 154, 154); letter-spacing: -0.691px;">Email</div>
<div class="a" style="left:474.2px;top:367.2px;width:64.5px;height:48.8px;background:#efefef;border:1.5px solid #cacaca;border-right:none;border-radius:5px 0 0 5px"></div>
<div class="a" style="left:493px;top:383px;width:26.5px;height:1.4px;background:#555"></div>
<div class="a" style="left:493px;top:391px;width:26.5px;height:1.4px;background:#555"></div>
<div class="a" style="left:493px;top:399px;width:26.5px;height:1.4px;background:#555"></div>
<div class="a" style="left:875px;top:367.2px;width:451px;height:48.8px;background:#fff;border-top:1.5px solid #cfcfcf;border-bottom:1.5px solid #cfcfcf"></div>
<div class="a" style="left:538.4px;top:367.2px;width:337.5px;height:48.8px;background:#fff;border:1.5px solid #9cafc1"></div>
<div class="t" style="left: 555.6px; top: 381.3px; font-size: 22.5px; color: rgb(43, 43, 43); letter-spacing: -0.688px;">Signer 2</div>
<div class="t" style="left: 893px; top: 382.1px; font-size: 21.5px; color: rgb(154, 154, 154); letter-spacing: -0.691px;">Email</div>
<div class="a" style="left:474.2px;top:426.8px;width:64.5px;height:48.8px;background:#efefef;border:1.5px solid #cacaca;border-right:none;border-radius:5px 0 0 5px"></div>
<div class="a" style="left:493px;top:443px;width:26.5px;height:1.4px;background:#555"></div>
<div class="a" style="left:493px;top:451px;width:26.5px;height:1.4px;background:#555"></div>
<div class="a" style="left:493px;top:459px;width:26.5px;height:1.4px;background:#555"></div>
<div class="a" style="left:875px;top:426.8px;width:451px;height:48.8px;background:#fff;border-top:1.5px solid #cfcfcf;border-bottom:1.5px solid #cfcfcf"></div>
<div class="a" style="left:538.4px;top:426.8px;width:337.5px;height:48.8px;background:#fff;border:1.5px solid #9cafc1"></div>
<div class="t" style="left: 555.6px; top: 440.9px; font-size: 22.5px; color: rgb(43, 43, 43); letter-spacing: -0.688px;">Signer 3</div>
<div class="t" style="left: 893px; top: 441.7px; font-size: 21.5px; color: rgb(154, 154, 154); letter-spacing: -0.691px;">Email</div>
<div class="a" style="left:473.4px;top:505px;width:56.5px;height:49.5px;background:#0676c8;border-radius:3px"></div>
<svg style="left:486px;top:515px" width="32" height="30" viewBox="0 0 32 30">
<circle cx="11.5" cy="7.5" r="5.3" fill="none" stroke="#fff" stroke-width="2.2"></circle>
<path d="M2 25c0-6 4-10 9.5-10 2 0 3.6.5 5 1.3" fill="none" stroke="#fff" stroke-width="2.2" stroke-linecap="round"></path>
<circle cx="20.5" cy="21.5" r="6.2" fill="none" stroke="#fff" stroke-width="2.2"></circle>
<path d="M20.5 18v7M17 21.5h7" stroke="#fff" stroke-width="2.2"></path></svg>
<div class="a" style="left:462.3px;top:580px;width:874px;height:155.5px;background:#f3f3f3"></div>
<div class="a" style="left:462.3px;top:580px;width:874px;height:2.8px;background:repeating-linear-gradient(to right,#bababa 0 9.4px,transparent 9.4px 18.9px)"></div>
<div class="a" style="left:462.3px;top:732.7px;width:874px;height:2.8px;background:repeating-linear-gradient(to right,#bababa 0 9.4px,transparent 9.4px 18.9px)"></div>
<div class="a" style="left:462.3px;top:580px;width:2.8px;height:155.5px;background:repeating-linear-gradient(to bottom,#bababa 0 7px,transparent 7px 17px,#bababa 17px 26.4px,transparent 26.4px 36px);background-size:100% 19px;background-position:0 -2px"></div>
<div class="a" style="left:1333.5px;top:580px;width:2.8px;height:155.5px;background:repeating-linear-gradient(to bottom,#bababa 0 9.4px,transparent 9.4px 18.9px);background-position:0 -2px"></div>
<div class="a" style="left:462.3px;top:580px;width:9.4px;height:2.8px;background:#bababa"></div>
<div class="a" style="left:462.3px;top:580px;width:2.8px;height:7px;background:#bababa"></div>
<div class="t" style="left: 832.6px; top: 648.3px; font-size: 21.5px; color: rgb(51, 51, 51); letter-spacing: -0.489px;">Signing Step 2</div>
<div class="t" style="left: 463px; top: 756.8px; font-size: 24.5px; color: rgb(17, 17, 17); font-weight: bold; letter-spacing: -0.5px; transform-origin: 0px 0px; transform: scaleX(0.8931);">CC:</div>
<div class="a" style="left:462.5px;top:795px;width:874px;height:55.5px;border:2px solid #c6c6c6;border-radius:6px;background:#fff"></div>
<div class="t" style="left: 480px; top: 812.7px; font-size: 22.5px; color: rgb(85, 85, 85); letter-spacing: -0.5px; transform-origin: 0px 0px; transform: scaleX(0.9704);">Enter Email(s)</div>
<div class="a" style="left:1384.6px;top:235.6px;width:409.5px;height:614.3px;border:1.5px solid #dcdcdc;border-radius:5px;background:#fff"></div>
<div class="a" style="left:1385.6px;top:236.6px;width:407.5px;height:51px;background:#f4f4f4;border-radius:4px 4px 0 0;border-bottom:1.5px solid #dcdcdc"></div>
<div class="t" style="left: 1405px; top: 251.6px; font-size: 21.5px; color: rgb(51, 51, 51); letter-spacing: -0.5px;">Recent Signers</div>
<div class="a" style="left:1385.6px;top:336px;width:407.5px;height:1.5px;background:#e0e0e0"></div>
<div class="a" style="left:1385.6px;top:388px;width:407.5px;height:1.5px;background:#e0e0e0"></div>
<div class="a" style="left:1385.6px;top:440px;width:407.5px;height:1.5px;background:#e0e0e0"></div>
<div class="a" style="left:1385.6px;top:491px;width:407.5px;height:1.5px;background:#e0e0e0"></div>
<div class="a" style="left:1385.6px;top:543px;width:407.5px;height:1.5px;background:#e0e0e0"></div>
<div class="a" style="left:1385.6px;top:595px;width:407.5px;height:1.5px;background:#e0e0e0"></div>
<div class="a" style="left:1385.6px;top:647px;width:407.5px;height:1.5px;background:#e0e0e0"></div>
<div class="a" style="left:1385.6px;top:699px;width:407.5px;height:1.5px;background:#e0e0e0"></div>
<div class="a" style="left:1385.6px;top:751px;width:407.5px;height:1.5px;background:#e0e0e0"></div>
<div class="a" style="left:1385.6px;top:802px;width:407.5px;height:1.5px;background:#e0e0e0"></div>
<div class="t" style="left: 1429px; top: 302.2px; font-size: 21.5px; color: rgb(51, 51, 51); letter-spacing: -0.127px;">New Signer</div>
<div class="a" style="left:1404px;top:357.6px;width:16px;height:1.5px;background:#a0a0a0"></div>
<div class="a" style="left:1404px;top:362.90000000000003px;width:16px;height:1.5px;background:#a0a0a0"></div>
<div class="a" style="left:1404px;top:368.20000000000005px;width:16px;height:1.5px;background:#a0a0a0"></div>
<div class="t" style="right:606.5px;top:352.3px;font-size:21.8px;color:#1e1e1e;letter-spacing:-0.05px">paul.lowe@email.em</div>
<div class="a" style="left:1404px;top:409.1px;width:16px;height:1.5px;background:#a0a0a0"></div>
<div class="a" style="left:1404px;top:414.40000000000003px;width:16px;height:1.5px;background:#a0a0a0"></div>
<div class="a" style="left:1404px;top:419.70000000000005px;width:16px;height:1.5px;background:#a0a0a0"></div>
<div class="t" style="right:597.2px;top:403.8px;font-size:21.8px;color:#1e1e1e;letter-spacing:-0.05px">neil.stone@email.em</div>
<div class="a" style="left:1404px;top:461.3px;width:16px;height:1.5px;background:#a0a0a0"></div>
<div class="a" style="left:1404px;top:466.6px;width:16px;height:1.5px;background:#a0a0a0"></div>
<div class="a" style="left:1404px;top:471.90000000000003px;width:16px;height:1.5px;background:#a0a0a0"></div>
<div class="t" style="right:620.5px;top:456.0px;font-size:21.8px;color:#1e1e1e;letter-spacing:-0.05px">anna.fries@email.em</div>
<div class="a" style="left:1404px;top:512.8px;width:16px;height:1.5px;background:#a0a0a0"></div>
<div class="a" style="left:1404px;top:518.0999999999999px;width:16px;height:1.5px;background:#a0a0a0"></div>
<div class="a" style="left:1404px;top:523.4px;width:16px;height:1.5px;background:#a0a0a0"></div>
<div class="t" style="left: 1429px; top: 507.5px; font-size: 21.8px; color: rgb(30, 30, 30); letter-spacing: -0.009px;">m.busby@email.em</div>
<div class="a" style="left:1404px;top:564.5999999999999px;width:16px;height:1.5px;background:#a0a0a0"></div>
<div class="a" style="left:1404px;top:569.8999999999999px;width:16px;height:1.5px;background:#a0a0a0"></div>
<div class="a" style="left:1404px;top:575.1999999999999px;width:16px;height:1.5px;background:#a0a0a0"></div>
<div class="t" style="left: 1429px; top: 559.3px; font-size: 21.8px; color: rgb(30, 30, 30); letter-spacing: 0.046px;">vernon.jones@email.em</div>
<div class="a" style="left:1404px;top:616.5px;width:16px;height:1.5px;background:#a0a0a0"></div>
<div class="a" style="left:1404px;top:621.8px;width:16px;height:1.5px;background:#a0a0a0"></div>
<div class="a" style="left:1404px;top:627.1px;width:16px;height:1.5px;background:#a0a0a0"></div>
<div class="t" style="left: 1429px; top: 611.2px; font-size: 21.8px; color: rgb(30, 30, 30); letter-spacing: -0.074px;">alex.hwang@email.em</div>
<div class="a" style="left:1404px;top:668.0px;width:16px;height:1.5px;background:#a0a0a0"></div>
<div class="a" style="left:1404px;top:673.3px;width:16px;height:1.5px;background:#a0a0a0"></div>
<div class="a" style="left:1404px;top:678.6px;width:16px;height:1.5px;background:#a0a0a0"></div>
<div class="t" style="left: 1429px; top: 662.7px; font-size: 21.8px; color: rgb(30, 30, 30); letter-spacing: 0.01px;">b.dugan@email.em</div>
<div class="a" style="left:1404px;top:719.9px;width:16px;height:1.5px;background:#a0a0a0"></div>
<div class="a" style="left:1404px;top:725.1999999999999px;width:16px;height:1.5px;background:#a0a0a0"></div>
<div class="a" style="left:1404px;top:730.5px;width:16px;height:1.5px;background:#a0a0a0"></div>
<div class="t" style="left: 1429px; top: 714.6px; font-size: 21.8px; color: rgb(30, 30, 30); letter-spacing: 0.076px;">iris.lamb@email.em</div>
<div class="a" style="left:1404px;top:771.8px;width:16px;height:1.5px;background:#a0a0a0"></div>
<div class="a" style="left:1404px;top:777.0999999999999px;width:16px;height:1.5px;background:#a0a0a0"></div>
<div class="a" style="left:1404px;top:782.4px;width:16px;height:1.5px;background:#a0a0a0"></div>
<div class="t" style="left: 1429px; top: 766.5px; font-size: 21.8px; color: rgb(30, 30, 30); letter-spacing: 0.276px;">molly.roberts@email.em</div>
<div class="a" style="left:1404px;top:823.3px;width:16px;height:1.5px;background:#a0a0a0"></div>
<div class="a" style="left:1404px;top:828.5999999999999px;width:16px;height:1.5px;background:#a0a0a0"></div>
<div class="a" style="left:1404px;top:833.9px;width:16px;height:1.5px;background:#a0a0a0"></div>
<div class="a" style="left:438.5px;top:882px;width:1380px;height:2px;background:#e9e9e9"></div>
<div class="t" style="left: 463px; top: 924.1px; font-size: 19.5px; color: rgb(30, 30, 30); letter-spacing: -0.755px;">First Signer 1 and Signer 2 and Signer 3 will be asked to sign;</div>
<div class="a" style="left:1515px;top:907.6px;width:104px;height:49.4px;background:#cdc9c6;border-radius:4px"></div>
<div class="t" style="left: 1534.3px; top: 921.2px; font-size: 22px; color: rgb(255, 255, 255); font-weight: bold; letter-spacing: -0.5px; transform-origin: 0px 0px; transform: scaleX(0.9288);">Cancel</div>
<div class="a" style="left:1635px;top:907.6px;width:159.5px;height:49.4px;background:#0676c8;border-radius:4px"></div>
<div class="t" style="left: 1654.2px; top: 921.2px; font-size: 22px; color: rgb(255, 255, 255); font-weight: bold; letter-spacing: -0.5px; transform-origin: 0px 0px; transform: scaleX(0.9119);">Save Signers</div>
<div class="a" style="left:1157px;top:229px;width:330px;height:330px;border-radius:50%;box-shadow:0 14px 90px 2px rgba(0,0,0,.08)"></div>
<div class="a" style="left:1157px;top:229px;width:330px;height:330px;border-radius:50%;overflow:hidden;background:#fff;border:10.4px solid #5193f4">
<div class="a" style="left:-1167.4px;top:-239.4px;width:2257px;height:1285px">
<div class="a" style="left:1100px;top:250.4px;width:327px;height:2px;background:#dedede"></div>
<div class="a" style="left:1425.4px;top:250.4px;width:2px;height:400px;background:#dedede"></div>
<div class="a" style="left:1100px;top:278px;width:161px;height:66.3px;background:#fff;border-top:2px solid #cfcfcf;border-bottom:2px solid #cfcfcf"></div>
<div class="a" style="left:1259px;top:278px;width:82px;height:66.3px;background:#efefef;border:2px solid #cfcfcf;border-right:none"></div>
<div class="a" style="left:1341px;top:278px;width:71.6px;height:66.3px;background:#818181;border-radius:0 9px 9px 0"></div>
<svg style="left:1299px;top:306.6px" width="17" height="9" viewBox="0 0 17 9"><path d="M0 0h17L8.5 8.7z" fill="#454545"></path></svg>
<svg style="left:1365.5px;top:296.8px" width="24" height="28" viewBox="0 0 24 28">
<path d="M1 5.5h22M8.5 5V1.5h7V5M3.8 6v20.5h16.4V6M9 10v13M15 10v13" fill="none" stroke="#fff" stroke-width="2.3"></path></svg>
<div class="a" style="left:1100px;top:357.9px;width:161px;height:66.3px;background:#fff;border-top:2px solid #cfcfcf;border-bottom:2px solid #cfcfcf"></div>
<div class="a" style="left:1259px;top:357.9px;width:82px;height:66.3px;background:#efefef;border:2px solid #cfcfcf;border-right:none"></div>
<div class="a" style="left:1341px;top:357.9px;width:71.6px;height:66.3px;background:#818181;border-radius:0 9px 9px 0"></div>
<svg style="left:1299px;top:386.5px" width="17" height="9" viewBox="0 0 17 9"><path d="M0 0h17L8.5 8.7z" fill="#454545"></path></svg>
<svg style="left:1365.5px;top:376.7px" width="24" height="28" viewBox="0 0 24 28">
<path d="M1 5.5h22M8.5 5V1.5h7V5M3.8 6v20.5h16.4V6M9 10v13M15 10v13" fill="none" stroke="#fff" stroke-width="2.3"></path></svg>
<div class="a" style="left:1100px;top:438.3px;width:161px;height:66.3px;background:#fff;border-top:2px solid #cfcfcf;border-bottom:2px solid #cfcfcf"></div>
<div class="a" style="left:1259px;top:438.3px;width:82px;height:66.3px;background:#efefef;border:2px solid #cfcfcf;border-right:none"></div>
<div class="a" style="left:1341px;top:438.3px;width:71.6px;height:66.3px;background:#818181;border-radius:0 9px 9px 0"></div>
<svg style="left:1299px;top:466.9px" width="17" height="9" viewBox="0 0 17 9"><path d="M0 0h17L8.5 8.7z" fill="#454545"></path></svg>
<svg style="left:1365.5px;top:457.1px" width="24" height="28" viewBox="0 0 24 28">
<path d="M1 5.5h22M8.5 5V1.5h7V5M3.8 6v20.5h16.4V6M9 10v13M15 10v13" fill="none" stroke="#fff" stroke-width="2.3"></path></svg>
</div></div>
</body></html>
